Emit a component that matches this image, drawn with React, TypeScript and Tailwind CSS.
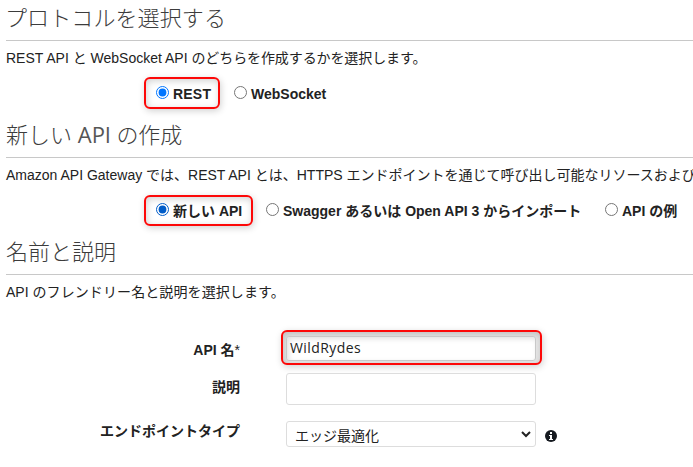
import type { ReactNode } from "react";

function Section({ title, text, className }: { title: ReactNode; text: ReactNode; className: string }) {
  return (
    <section className={`flex flex-col pl-[6px] ${className}`}>
      <h2 className="h-[41px] border-b border-[#c8c8c8] pt-[1px] font-['Open_Sans','Noto_Sans_CJK_JP',sans-serif] text-[22px] leading-[33px] font-light text-[#3c3c3c]">
        {title}
      </h2>
      <p className="mt-[7px] h-[20px] text-[14px] leading-[20px] text-[#222]">{text}</p>
    </section>
  );
}

function Radio({ checked = false, color = "#0075ff" }: { checked?: boolean; color?: string }) {
  return (
    <svg className="block shrink-0" width="13" height="13" viewBox="0 0 13 13">
      <circle cx="6.5" cy="6.5" r="6" fill="#fff" stroke={checked ? color : "#767676"} />
      {checked && <circle cx="6.5" cy="6.5" r="3.9" fill={color} />}
    </svg>
  );
}

function Option({ label, checked, color, className = "" }: { label: ReactNode; checked?: boolean; color?: string; className?: string }) {
  return (
    <label className={`flex items-start text-[14px] leading-[20px] font-bold ${className}`}>
      <Radio checked={checked} color={color} />
      <span className="mt-[-2px] ml-[4px]">{label}</span>
    </label>
  );
}

const highlight = "rounded-[6px] border-2 border-[#fd0808] shadow-[1px_2px_7px_rgba(0,0,0,0.18),inset_1px_2px_7px_rgba(0,0,0,0.18)]";

export default function App() {
  return (
    <main className="h-[467px] w-[693px] overflow-hidden bg-white font-['Liberation_Sans','Noto_Sans_CJK_JP',sans-serif] whitespace-nowrap text-[#222]">
      <Section
        className="h-[77px]"
        title={<span className="ml-[-1px] tracking-[0.1px]">プロトコルを選択する</span>}
        text={<>REST API と WebSocket API <span className="tracking-[-0.1px]">のどちらを作成するかを選択します。</span></>}
      />
      <div className="flex h-[40px] pl-[144px]">
        <div className={`h-[32px] w-[76px] pt-[7px] pl-[10px] ${highlight}`}>
          <Option label={<span className="tracking-[0.2px]">REST</span>} checked />
        </div>
        <Option className="mt-[9px] ml-[14px]" label="WebSocket" />
      </div>
      <Section
        className="h-[78px]"
        title={<>新しい <span className="font-['Open_Sans'] font-normal text-[#555]">API</span><span className="tracking-[-0.2px]"> の作成</span></>}
        text="Amazon API Gateway では、REST API とは、HTTPS エンドポイントを通じて呼び出し可能なリソースおよび"
      />
      <div className="flex h-[39px] pl-[144px]">
        <div className={`h-[31px] w-[109px] pt-[6px] pl-[10px] ${highlight}`}>
          <Option label="新しい API" checked color="#005cc8" />
        </div>
        <Option className="mt-[8px] ml-[13px] w-[339px]" label="Swagger あるいは Open API 3 からインポート" />
        <Option className="mt-[8px]" label="API の例" />
      </div>
      <Section
        className="h-[97px]"
        title="名前と説明"
        text={<>API <span className="tracking-[0.1px]">のフレンドリー名と説明を選択します。</span></>}
      />
      <form className="flex flex-col">
        <div className="flex h-[42px]">
          <span className="mt-[9px] w-[240px] text-right text-[14px] leading-[20px] font-bold">
            API 名<span className="font-normal">*</span>
          </span>
          <div className={`mt-[-1px] ml-[41px] h-[35px] w-[261px] pt-[4px] pl-[3px] ${highlight} bg-[#e6e6e6]`}>
            <div className="h-[25px] w-[250px] rounded-[3px] border border-[#c8c8c8] bg-white pl-[3px] font-['Open_Sans',sans-serif] text-[14px] leading-[21px] tracking-[0.42px] shadow-[inset_2px_2px_5px_rgba(0,0,0,0.12)]">
              WildRydes
            </div>
          </div>
        </div>
        <div className="flex h-[48px]">
          <span className="mt-[4px] w-[240px] text-right text-[14px] leading-[20px] font-bold">説明</span>
          <div className="ml-[46px] h-[32px] w-[250px] rounded-[3px] border border-[#ddd]" />
        </div>
        <div className="flex">
          <span className="w-[240px] text-right text-[14px] leading-[20px] font-bold">エンドポイントタイプ</span>
          <div className="ml-[46px] flex h-[26px] w-[250px] justify-between rounded-[3px] border border-[#ddd] pr-[4px] pl-[8px] text-[14px] leading-[28px]">
            <span>エッジ最適化</span>
            <svg className="mt-[9px]" width="10" height="7" viewBox="0 0 10 7" fill="none" stroke="#222" strokeWidth="2">
              <path d="M1 1 5 5 9 1" />
            </svg>
          </div>
          <svg className="mt-[9px] ml-[9px]" width="12" height="12" viewBox="0 0 12 12">
            <circle cx="6" cy="6" r="6" fill="#161a20" />
            <path d="M5 2h2v2H5zM4 5h3v4h1v1H4V9h1V6H4z" fill="#fff" />
          </svg>
        </div>
      </form>
    </main>
  );
}
